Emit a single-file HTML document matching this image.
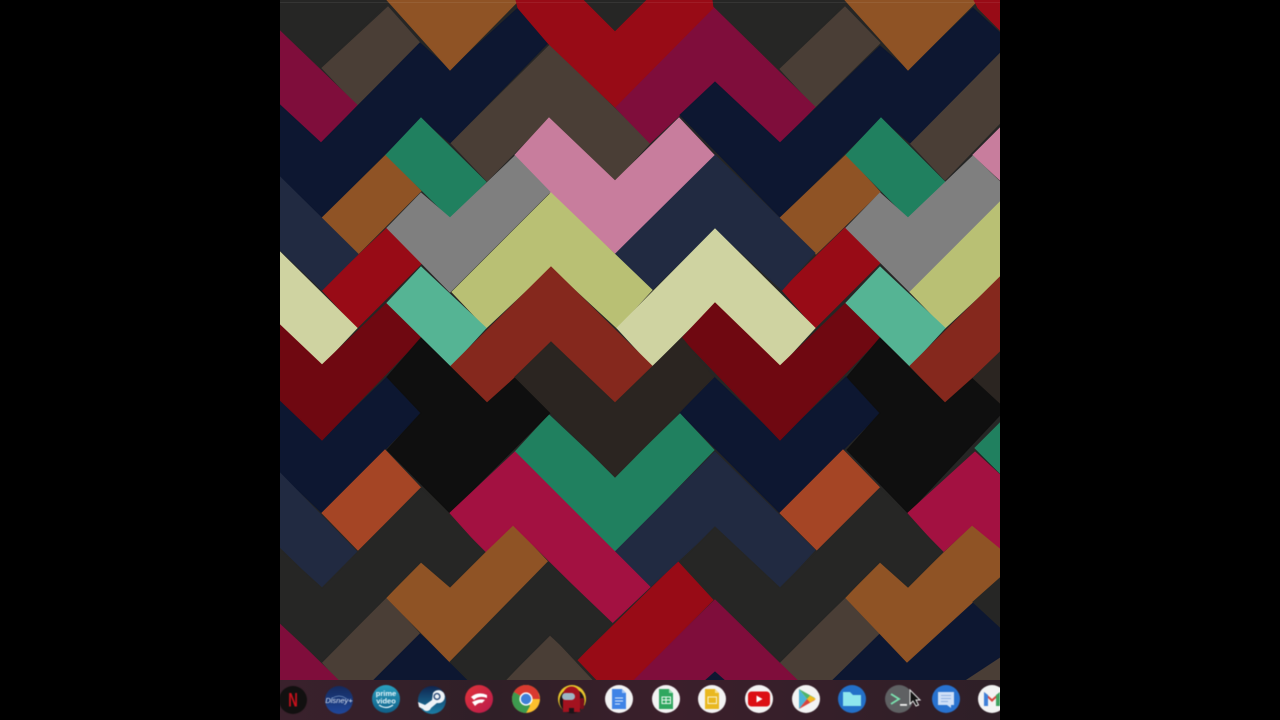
<!DOCTYPE html>
<html><head><meta charset="utf-8"><title>Desktop</title>
<style>html,body{margin:0;padding:0;background:#000;width:1280px;height:720px;overflow:hidden}svg{position:absolute;left:0;top:0;display:block}text{font-family:"Liberation Sans",sans-serif}.w g{stroke-width:1;stroke-linejoin:miter}.w{filter:blur(.35px)}</style></head>
<body>
<svg width="1280" height="720" viewBox="0 0 1280 720" xmlns="http://www.w3.org/2000/svg">
<defs>
<clipPath id="c"><rect x="280" y="0" width="720" height="720"/></clipPath>
<linearGradient id="shelf" x1="0" x2="1" y1="0" y2="0"><stop offset="0" stop-color="#3a212c"/><stop offset=".3" stop-color="#2f1f27"/><stop offset=".55" stop-color="#3b1f2b"/><stop offset="1" stop-color="#2e1f27"/></linearGradient>
<linearGradient id="pr" x1="0" x2="0" y1="0" y2="1"><stop offset="0" stop-color="#2aa0c0"/><stop offset="1" stop-color="#0f5f88"/></linearGradient>
<linearGradient id="st" x1="0" x2="0" y1="0" y2="1"><stop offset="0" stop-color="#10254f"/><stop offset="1" stop-color="#1b7fa6"/></linearGradient>
<linearGradient id="sd" x1="0" x2="1" y1="0" y2="1"><stop offset="0" stop-color="#e2343a"/><stop offset="1" stop-color="#b81a4c"/></linearGradient>
<linearGradient id="ds" x1="0" x2="0" y1="0" y2="1"><stop offset="0" stop-color="#152a5c"/><stop offset="1" stop-color="#20479a"/></linearGradient>
</defs>
<g clip-path="url(#c)">
<g class="w">
<rect x="280" y="0" width="720" height="680" fill="#262625"/>
<g fill="#262625" stroke="#262625">
<polygon points="280,0 390,0 322,68 280,31"/>
<polygon points="710,0 848,0 780,69 713,7"/>
<polygon points="583,0 647,0 615,32"/>
</g>
<g fill="#4a3e36" stroke="#4a3e36">
<polygon points="388,7 420,43 357,105 322,68"/>
<polygon points="845,7 880,43 815,107 780,69"/>
<polygon points="550,45 650,143 615,181 549,118 487,181 451,143"/>
<polygon points="1000,52 910,143 945,180 1000,123"/>
<polygon points="387,598 420,634 374,680 338,680 322,662"/>
<polygon points="550,635 592,680 507,680"/>
<polygon points="846,598 880,634 833,680 797,680 780,662"/>
<polygon points="1000,657 965,680 1000,680"/>
</g>
<g fill="#7f0d3b" stroke="#7f0d3b">
<polygon points="280,31 357,105 321,143 280,105"/>
<polygon points="713,7 815,107 780,143 715,82 650,143 615,107"/>
<polygon points="280,623 338,680 280,680"/>
<polygon points="715,600 797,680 633,680"/>
</g>
<g fill="#0d1731" stroke="#0d1731">
<polygon points="518,8 548,43 450,143 421,118 322,217 280,177 280,105 321,143 420,43 450,70"/>
<polygon points="973,8 1000,33 1000,52 910,143 881,118 780,217 680,115 715,82 780,143 880,46 908,70"/>
<polygon points="387,377 421,413 322,513 280,473 280,400 322,440"/>
<polygon points="714,377 780,440 846,377 880,413 780,513 680,413"/>
<polygon points="420,634 450,662 468,680 374,680"/>
<polygon points="880,634 907,662 973,600 1000,627 1000,657 965,680 833,680"/>
<polygon points="715,672 706,680 724,680"/>
</g>
<g fill="#8f5325" stroke="#8f5325">
<polygon points="387,0 519,0 450,70"/>
<polygon points="845,0 978,0 908,70"/>
<polygon points="322,218 386,155 421,191 358,254"/>
<polygon points="780,218 846,155 880,192 816,254"/>
<polygon points="513,525 548,562 450,662 387,598 421,562 450,587"/>
<polygon points="973,525 1000,548 1000,577 907,662 846,598 880,562 908,587"/>
</g>
<g fill="#980b16" stroke="#980b16">
<polygon points="516,0 583,0 615,32 647,0 712,0 713,8 615,107 548,43 518,8"/>
<polygon points="974,0 1000,0 1000,30 978,8"/>
<polygon points="387,228 422,263 357,328 322,290"/>
<polygon points="845,228 880,263 815,328 782,290"/>
<polygon points="678,562 713,600 633,680 597,680 578,660"/>
</g>
<g fill="#20805f" stroke="#20805f">
<polygon points="421,118 486,182 450,218 386,155"/>
<polygon points="881,118 945,182 908,218 846,155"/>
<polygon points="549,415 615,477 680,414 714,450 615,552 515,452"/>
<polygon points="1000,423 975,448 1000,473"/>
</g>
<g fill="#212a41" stroke="#212a41">
<polygon points="280,177 358,254 322,290 280,250"/>
<polygon points="715,155 815,253 782,290 715,229 652,290 615,253"/>
<polygon points="715,452 815,550 780,588 715,527 650,587 615,552"/>
<polygon points="280,473 357,552 322,588 280,547"/>
</g>
<g fill="#c87d9d" stroke="#c87d9d">
<polygon points="549,118 615,181 679,118 714,155 615,253 550,193 515,155"/>
<polygon points="1000,128 973,155 1000,180"/>
</g>
<g fill="#7f7f7f" stroke="#7f7f7f">
<polygon points="515,156 550,192 450,292 387,228 421,193 450,218"/>
<polygon points="973,156 1000,182 1000,202 910,292 846,228 880,193 908,218"/>
</g>
<g fill="#b9c074" stroke="#b9c074">
<polygon points="551,193 652,290 617,328 551,267 486,328 452,292"/>
<polygon points="1000,202 910,292 945,328 1000,277"/>
</g>
<g fill="#cfd3a1" stroke="#cfd3a1">
<polygon points="715,229 815,328 780,366 715,303 652,366 617,328"/>
<polygon points="280,252 357,328 322,365 280,325"/>
</g>
<g fill="#6f0811" stroke="#6f0811">
<polygon points="387,303 421,338 322,440 280,400 280,325 322,365"/>
<polygon points="682,338 715,303 780,366 846,303 880,338 780,440"/>
</g>
<g fill="#55b494" stroke="#55b494">
<polygon points="421,267 486,328 451,366 387,303"/>
<polygon points="880,267 945,328 910,366 846,303"/>
</g>
<g fill="#85281d" stroke="#85281d">
<polygon points="551,267 652,366 615,403 551,342 487,403 451,366"/>
<polygon points="1000,277 910,366 945,403 1000,352"/>
</g>
<g fill="#0f0f0f" stroke="#0f0f0f">
<polygon points="421,338 487,403 516,377 550,413 450,513 387,450 421,413 387,377"/>
<polygon points="880,338 945,403 973,378 1000,403 1000,415 908,513 847,450 880,413 847,377"/>
</g>
<g fill="#2b2521" stroke="#2b2521">
<polygon points="551,342 615,403 682,338 714,377 615,477 515,377"/>
<polygon points="973,378 1000,352 1000,403"/>
</g>
<g fill="#a31141" stroke="#a31141">
<polygon points="515,452 650,587 612,623 513,525 485,552 450,513"/>
<polygon points="975,452 1000,475 1000,548 972,525 943,552 908,513"/>
</g>
<g fill="#a54525" stroke="#a54525">
<polygon points="385,450 421,488 358,550 322,513"/>
<polygon points="843,450 880,488 817,550 780,513"/>
</g>
<g fill="#262625" stroke="#262625">
<polygon points="421,488 485,552 450,587 421,562 322,662 280,623 280,550 322,588"/>
<polygon points="548,562 612,623 577,660 550,635 505,680 468,680 450,662"/>
<polygon points="715,527 780,588 880,488 943,552 908,587 880,562 780,662 680,562"/>
<polygon points="1000,578 973,602 1000,627"/>
</g>
</g>
<rect x="280" y="2" width="720" height="1" fill="#fff" opacity=".07"/>
<rect x="280" y="680" width="720" height="40" fill="url(#shelf)"/>

<g style="filter:blur(.45px)">
<!-- Netflix -->
<g transform="translate(293,700)"><circle r="14" fill="#121010"/><text transform="scale(.78,1.15)" x="0" y="5.600" font-size="17" font-weight="700" text-anchor="middle" fill="#c8101c">N</text></g>
<!-- Disney+ -->
<g transform="translate(339,700)"><circle r="14" fill="url(#ds)"/><text x="0" y="3" font-size="7.500" font-style="italic" text-anchor="middle" fill="#dfe8f5">Disney+</text><path d="M-8-1Q0-7 8-1" stroke="#9fc0e8" stroke-width=".5" fill="none"/></g>
<!-- Prime -->
<g transform="translate(386,699)"><circle r="14" fill="url(#pr)"/><text x="0" y="-3" font-size="7.500" font-weight="700" text-anchor="middle" fill="#e8f6fb">prime</text><text x="0" y="4.500" font-size="7.500" font-weight="700" text-anchor="middle" fill="#e8f6fb">video</text><path d="M-7 6Q0 11 7 6" stroke="#e8f6fb" stroke-width="1.200" fill="none"/></g>
<!-- Steam -->
<g transform="translate(432,700)"><circle r="14" fill="url(#st)"/><path d="M-14 2L-7 5L0 0L1-7A6.500 6.500 0 1 1 5 3L-1 8A4.500 4.500 0 0 1-9 9L-13 7Z" fill="#eef3f7"/><circle cx="5" cy="-3.500" r="3.600" fill="#2a4a78"/><circle cx="5" cy="-3.500" r="2.200" fill="#eef3f7"/></g>
<!-- Stadia -->
<g transform="translate(479,699)"><circle r="14" fill="url(#sd)"/><path d="M-8-2Q-1-8 8-4L8-1Q0-4-5 1Z" fill="#fff"/><path d="M-7 3Q1-1 6 1L3 4Q0 3-4 7Z" fill="#fff"/></g>
<!-- Chrome -->
<g transform="translate(526,699)"><circle r="14" fill="#fbc02d"/><path d="M0 0L-12.100-7A14 14 0 0 1 12.100-7L14 0Z" fill="#d93a30"/><path d="M0 0L-12.100-7A14 14 0 0 0 0 14L4 7Z" fill="#3d9a4f"/><circle r="6.600" fill="#fff"/><circle r="5.200" fill="#3f80d8"/></g>
<!-- Among Us -->
<g transform="translate(572,699)"><circle r="14" fill="#e8c62c"/><circle cx="0" cy="2" r="12.500" fill="#1c1418"/><path d="M-9 13V-4A8.500 8.500 0 0 1 8-4V13H2V9H-3V13Z" fill="#a3121f"/><rect x="8" y="-1" width="4" height="11" rx="1.500" fill="#7a0e1a"/><rect x="-10" y="-6" width="13" height="7" rx="3.500" fill="#9db6c4"/></g>
<!-- Docs -->
<g transform="translate(619,699)"><circle r="14" fill="#f3f3f3"/><path d="M-7-10H3L7-6V10H-7Z" fill="#3f83e6"/><path d="M3-10L7-6H3Z" fill="#a9c8f5"/><path d="M-4-1H4M-4 2H4M-4 5H1" stroke="#dbe8fb" stroke-width="1"/></g>
<!-- Sheets -->
<g transform="translate(666,699)"><circle r="14" fill="#f3f3f3"/><path d="M-7-10H3L7-6V10H-7Z" fill="#2fa75f"/><path d="M3-10L7-6H3Z" fill="#a3dcb8"/><rect x="-4" y="-2" width="8.500" height="6.500" fill="none" stroke="#eaf7ef" stroke-width="1"/><path d="M0-2V4.500M-4 1H4.500" stroke="#eaf7ef" stroke-width="1"/></g>
<!-- Slides -->
<g transform="translate(712,699)"><circle r="14" fill="#f3f3f3"/><path d="M-7-10H3L7-6V10H-7Z" fill="#e9b820"/><path d="M3-10L7-6H3Z" fill="#f6e08e"/><rect x="-4" y="-2" width="8.500" height="6.500" fill="none" stroke="#fbf3cf" stroke-width="1"/></g>
<!-- YouTube -->
<g transform="translate(759,699)"><circle r="14" fill="#f3f3f3"/><rect x="-11" y="-7.500" width="22" height="15" rx="3.500" fill="#dc0f14"/><path d="M-2.500-3.500L3.500 0L-2.500 3.500Z" fill="#fff"/></g>
<!-- Play -->
<g transform="translate(806,699)"><circle r="14" fill="#f3f3f3"/><path d="M-7-10L1 0L-7 10Z" fill="#4ab3d6"/><path d="M-7-10L9-1L1 0Z" fill="#4fb56c"/><path d="M-7 10L9 1L1 0Z" fill="#d8433c"/><path d="M4-3.500L10 0L4 3.500L1 0Z" fill="#f0b922"/></g>
<!-- Files -->
<g transform="translate(852,699)"><circle r="14" fill="#2370c8"/><path d="M-9-7H-2L1-4H9V7H-9Z" fill="#8fe6ee"/></g>
<!-- Terminal -->
<g transform="translate(899,699)"><circle r="14" fill="#5f6163"/><path d="M-8-5L0 0L-8 5" fill="none" stroke="#7be3b0" stroke-width="1.800"/><rect x="1" y="5" width="7" height="1.800" fill="#f0f0f0"/></g>
<!-- Messages -->
<g transform="translate(946,699)"><circle r="14" fill="#2872cf"/><path d="M-8-7H8V6H5V9L1 6H-8Z" fill="#cfe0f7"/><path d="M-5-3.500H5M-5-.500H5M-5 2.500H2" stroke="#8fb2e3" stroke-width="1"/></g>
<!-- Gmail -->
<g transform="translate(992,699)"><circle r="14" fill="#f3f3f3"/><path d="M-8-7V7H-4V-1L0 3L4-1V7H8V-7L0 0Z" fill="#d8433c"/><path d="M-8-7L-4-4V7H-8Z" fill="#3f80d8"/><path d="M4-4L8-7V7H4Z" fill="#3fa35f"/></g>
<!-- Cursor -->
<path d="M910 690V704L913 701L916 706L918.500 705L916 700H920Z" fill="#111" stroke="#e8e8e8" stroke-width="1"/>
</g>
</g>
</svg>
</body></html>
